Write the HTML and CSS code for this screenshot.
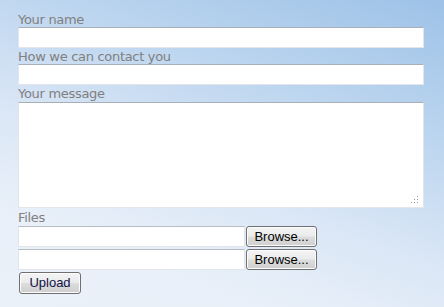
FILE: index.html
```html
<!DOCTYPE html>
<html>
<head>
<meta charset="utf-8">
<link rel="stylesheet" href="styles.css">
</head>
<body>
<form class="form">
  <label class="lbl">Your name</label>
  <input class="field" type="text">
  <label class="lbl">How we can contact you</label>
  <input class="field" type="text">
  <label class="lbl lbl-msg">Your message</label>
  <div class="area-wrap">
    <textarea class="area"></textarea>
    <svg class="grip" width="8" height="8" viewBox="0 0 8 8">
      <rect x="6" y="0" width="1" height="1" fill="#9a9a9a"/>
      <rect x="3" y="3" width="1" height="1" fill="#9a9a9a"/>
      <rect x="6" y="3" width="1" height="1" fill="#9a9a9a"/>
      <rect x="0" y="6" width="1" height="1" fill="#9a9a9a"/>
      <rect x="3" y="6" width="1" height="1" fill="#9a9a9a"/>
      <rect x="6" y="6" width="1" height="1" fill="#9a9a9a"/>
    </svg>
  </div>
  <label class="lbl lbl-files">Files</label>
  <div class="file-row">
    <input class="file-box" type="text" readonly>
    <button class="btn browse" type="button">Browse...</button>
  </div>
  <div class="file-row">
    <input class="file-box" type="text" readonly>
    <button class="btn browse" type="button">Browse...</button>
  </div>
  <button class="btn upload" type="button">Upload</button>
</form>
</body>
</html>
```
FILE: styles.css
```css
html, body {
  margin: 0;
  height: 100%;
}
body {
  background: linear-gradient(200deg, #9dc2e7 0%, #bcd5ef 30%, #dbe7f6 58%, #e9f0f9 80%, #ebf1f9 100%);
  font-family: "DejaVu Sans", Verdana, sans-serif;
  overflow: hidden;
}
.form {
  display: flex;
  flex-direction: column;
  align-items: flex-start;
  padding: 11px 0 0 18px;
}
.lbl {
  display: block;
  box-sizing: border-box;
  font-size: 13px;
  letter-spacing: -0.3px;
  line-height: 15px;
  padding-top: 1px;
  color: #808080;
  height: 16px;
}
.lbl-msg {
  height: 17px;
}
.lbl-files {
  height: 18px;
  padding-top: 2px;
}
.field {
  box-sizing: border-box;
  width: 406px;
  height: 21px;
  margin: 0;
  padding: 0 2px;
  border: 1px solid #e2e6eb;
  border-top-color: #a9afb7;
  background: #fff;
  outline: none;
}
.area-wrap {
  position: relative;
  width: 406px;
  height: 106px;
}
.area {
  box-sizing: border-box;
  display: block;
  width: 406px;
  height: 106px;
  margin: 0;
  padding: 2px;
  border: 1px solid #e2e6eb;
  border-top-color: #a9afb7;
  background: #fff;
  resize: none;
  outline: none;
}
.grip {
  position: absolute;
  right: 5px;
  bottom: 4px;
}
.file-row {
  display: flex;
  gap: 1px;
  margin-bottom: 2px;
}
.file-box {
  box-sizing: border-box;
  width: 227px;
  height: 21px;
  margin: 0;
  padding: 0 2px;
  border: 1px solid #e2e6eb;
  border-top-color: #b8bdc4;
  background: #fff;
  outline: none;
}
.btn {
  box-sizing: border-box;
  height: 21px;
  margin: 0;
  padding: 0 0 1px;
  border: 1px solid #707070;
  border-radius: 3px;
  background: linear-gradient(to bottom, #f4f4f4 0%, #ebebeb 48%, #dddddd 52%, #cfcfcf 100%);
  font-family: "Liberation Sans", Arial, sans-serif;
  font-size: 13px;
  color: #000;
  box-shadow: inset 0 0 0 1px #fcfcfc;
}
.browse {
  width: 71px;
}
.upload {
  width: 62px;
  height: 22px;
  margin-left: 1px;
  color: #10104a;
}
```
